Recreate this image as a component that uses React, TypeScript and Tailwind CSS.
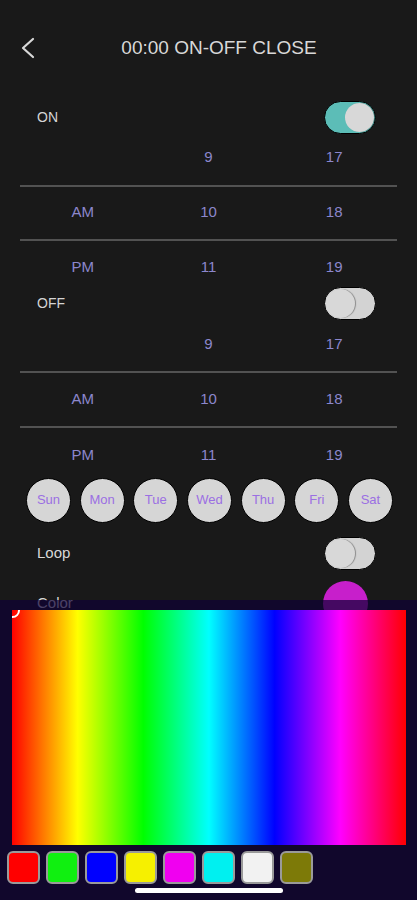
import React from 'react';

const swatches = ['#ff0000', '#10f010', '#0000ff', '#f6f000', '#f000f0', '#00f0f0', '#f2f2f2', '#7d7a08'];
const days = ['Sun', 'Mon', 'Tue', 'Wed', 'Thu', 'Fri', 'Sat'];

function Toggle({on}: {on: boolean}) {
	return (
		<div
			className={`w-[52px] h-[33px] rounded-full border border-black flex items-center px-[1px] ${
				on ? 'bg-[#5cbdb7] justify-end' : 'bg-[#d3d3d3] justify-start'
			}`}
		>
			<div className="w-[29px] h-[29px] rounded-full bg-[#d8d8d8] shadow-[1px_0_1px_rgba(0,0,0,0.35)]" />
		</div>
	);
}

function Picker({pads}: {pads: [string, string, string]}) {
	return (
		<div className="mx-[20px] text-[15px] leading-[20px] text-[#8c87cc]">
			<div className={`h-[51px] grid grid-cols-3 text-center ${pads[0]}`}>
				<span />
				<span>9</span>
				<span>17</span>
			</div>
			<div className="h-[2px] bg-[#525252]" />
			<div className={`grid grid-cols-3 text-center ${pads[1]}`}>
				<span>AM</span>
				<span>10</span>
				<span>18</span>
			</div>
			<div className="h-[2px] bg-[#525252]" />
			<div className={`grid grid-cols-3 text-center ${pads[2]}`}>
				<span>PM</span>
				<span>11</span>
				<span>19</span>
			</div>
		</div>
	);
}

export default function App() {
	return (
		<div className="relative w-[417px] h-[900px] overflow-hidden bg-[#191919] font-['Liberation_Sans',Arial,sans-serif]">
			<div className="h-[100px] flex items-start pt-[37px]">
				<svg width="16" height="22" viewBox="0 0 16 22" className="ml-[20px] shrink-0">
					<polyline points="13,2 3,11 13,20" fill="none" stroke="#d8d8d8" strokeWidth="2.2" strokeLinecap="round" strokeLinejoin="round" />
				</svg>
				<div className="flex-1 text-center pr-[15px] text-[19px] leading-[22px] text-[#d8d8d8]">00:00 ON-OFF CLOSE</div>
			</div>

			<div className="h-[34px] flex items-center justify-between pl-[37px] pr-[41px]">
				<span className="text-[14px] text-[#d4d4d4]">ON</span>
				<Toggle on />
			</div>

			<Picker pads={['pt-[13px]', 'h-[52px] pt-[15px]', 'h-[45px] pt-[16px]']} />

			<div className="h-[34px] flex items-center justify-between pl-[37px] pr-[41px]">
				<span className="text-[14px] text-[#d4d4d4]">OFF</span>
				<Toggle on={false} />
			</div>

			<Picker pads={['pt-[14px]', 'h-[53px] pt-[16px]', 'h-[49px] pt-[17px]']} />

			<div className="h-[46px] flex items-center justify-between pl-[26px] pr-[24px]">
				{days.map((d) => (
					<div
						key={d}
						className="w-[45px] h-[45px] rounded-full bg-[#d6d6d6] border border-black flex items-center justify-center text-[13px] text-[#9b6fe3]"
					>
						{d}
					</div>
				))}
			</div>

			<div className="mt-[14px] h-[33px] flex items-center justify-between pl-[37px] pr-[41px]">
				<span className="text-[15px] text-[#d8d8d8]">Loop</span>
				<Toggle on={false} />
			</div>

			<div className="mt-[11px] h-[45px] flex items-center justify-between pl-[37px] pr-[49px]">
				<span className="text-[15px] text-[#d8d8d8]">Color</span>
				<div className="w-[45px] h-[45px] rounded-full bg-[#c71fcb]" />
			</div>

			<div className="absolute left-0 right-0 top-[600px] bottom-0 bg-[#0e0035]/70 flex flex-col">
				<div className="relative mt-[10px] mx-[12px] w-[394px] h-[235px] overflow-hidden bg-[linear-gradient(to_right,#ff0000,#ffff00,#00ff00,#00ffff,#0000ff,#ff00ff,#ff0000)]">
					<div className="absolute -left-[7px] -top-[7px] w-[15px] h-[15px] rounded-full border-2 border-white" />
				</div>
				<div className="mt-[6px] pl-[7px] flex gap-[6px]">
					{swatches.map((c) => (
						<div key={c} className="w-[33px] h-[33px] rounded-[6px] border-2 border-[#9a9a9a]" style={{backgroundColor: c}} />
					))}
				</div>
				<div className="mt-[4px] ml-[135px] w-[148px] h-[5px] rounded-full bg-white" />
			</div>
		</div>
	);
}
